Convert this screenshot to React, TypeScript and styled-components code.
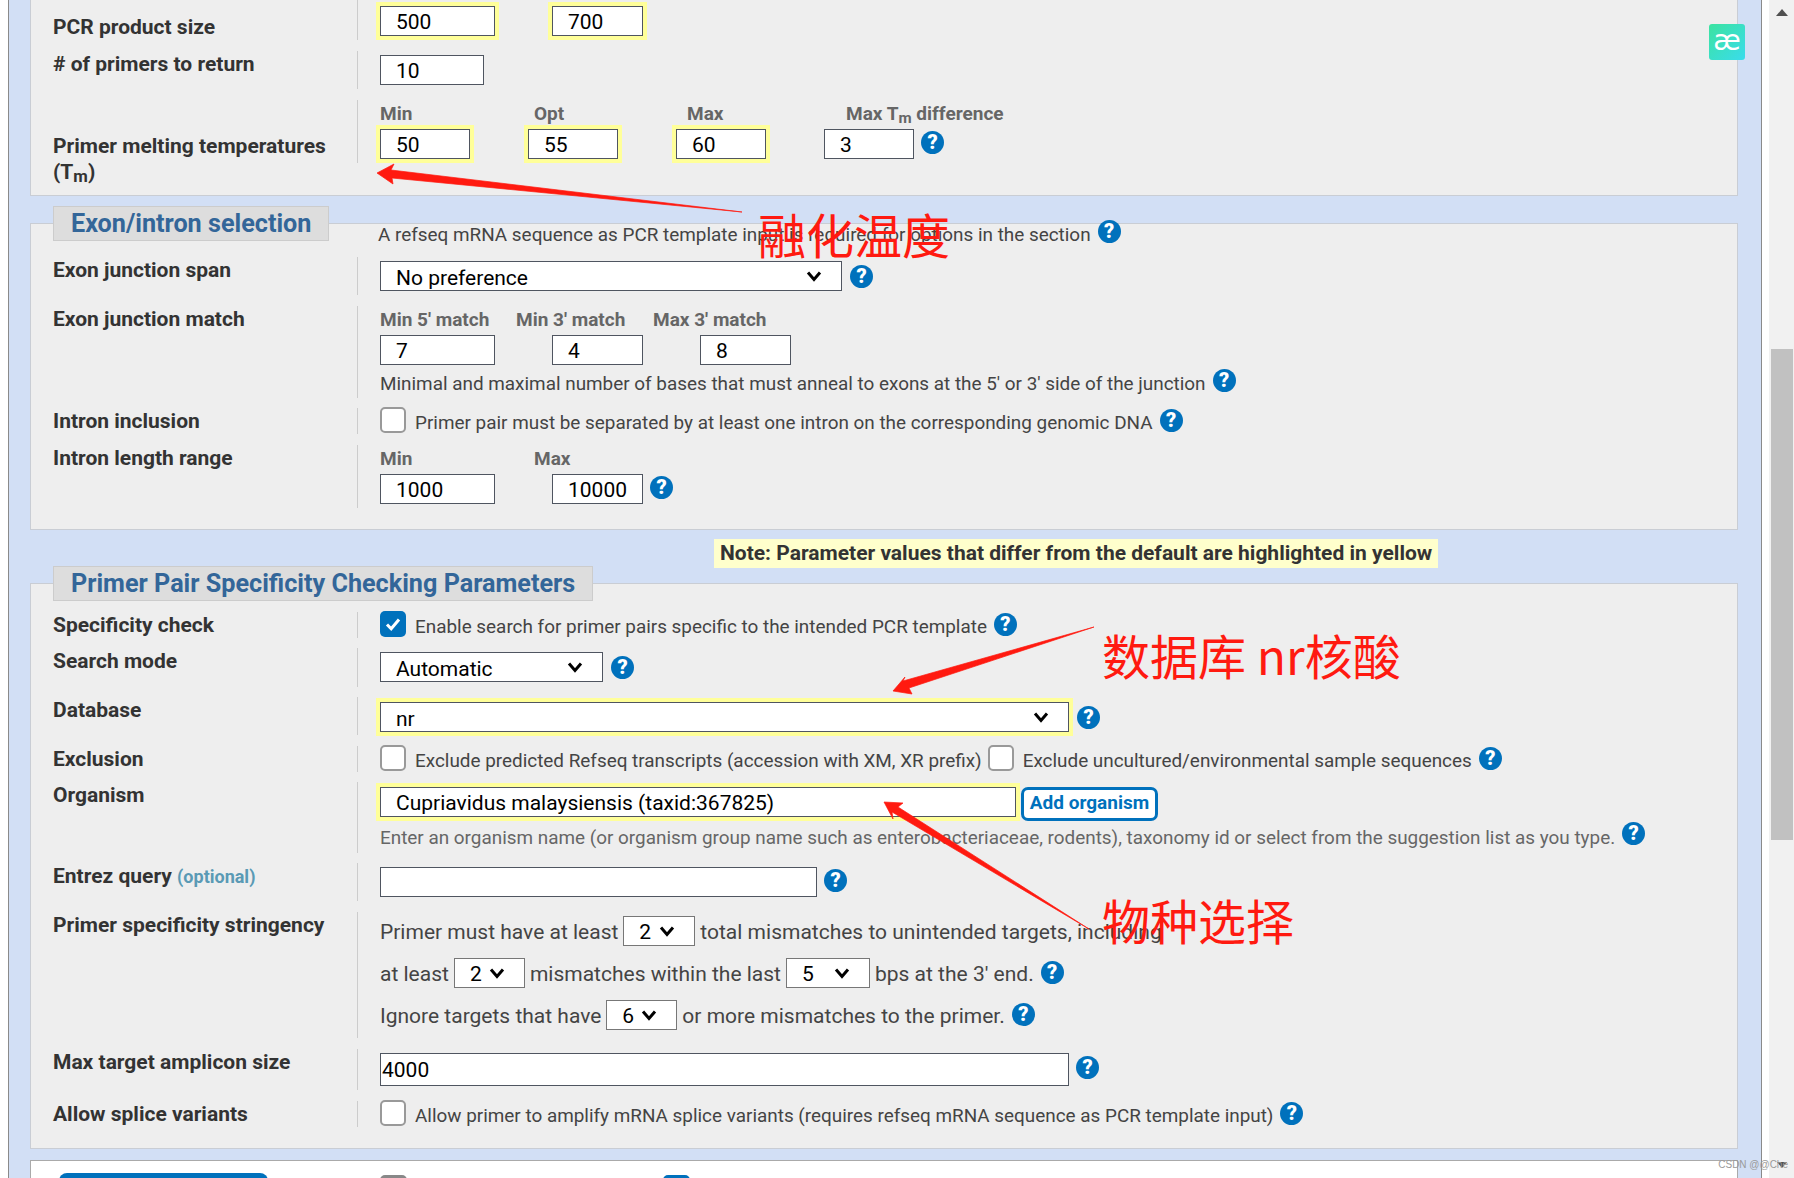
import styled, { createGlobalStyle } from 'styled-components'

const GlobalStyle = createGlobalStyle`
  html, body {
    margin: 0;
    padding: 0;
    height: 1178px;
    overflow: hidden;
    background: #fff;
  }
  body {
    font-family: Roboto, "Liberation Sans", sans-serif;
  }
`

function Help({ up }: { up?: number }) {
  return <HelpDot $up={up ?? 0}>?</HelpDot>
}

function Check({ on, left }: { on?: boolean; left?: number }) {
  return (
    <CheckBox $on={!!on} $left={left ?? 0}>
      {on && (
        <svg width="18" height="18" viewBox="0 0 18 18">
          <path d="M3 9.5l4.2 4.3L15 4.5" fill="none" stroke="#fff" strokeWidth="3" />
        </svg>
      )}
    </CheckBox>
  )
}

function TextBox({ value, w, hl }: { value: string; w: number; hl?: boolean }) {
  return <Input readOnly value={value} $w={w} $hl={!!hl} />
}

function Chevron() {
  return (
    <ChevronIcon width="16" height="12" viewBox="0 0 16 12">
      <path d="M2 2.5l6 7 6-7" fill="none" stroke="#000" strokeWidth="3" />
    </ChevronIcon>
  )
}

function Drop({ value, w, hl }: { value: string; w: number; hl?: boolean }) {
  return (
    <DropWrap $w={w}>
      <Select value={value} onChange={() => {}} $hl={!!hl}>
        <option value={value}>{value}</option>
      </Select>
      <Chevron />
    </DropWrap>
  )
}

function InlineDrop({ value, w }: { value: string; w: number }) {
  return (
    <InlineWrap $w={w}>
      <SmallSelect value={value} onChange={() => {}}>
        <option value={value}>{value}</option>
      </SmallSelect>
      <Chevron />
    </InlineWrap>
  )
}

export default function App() {
  return (
    <>
      <GlobalStyle />
      <Page>
        <Main>
          <Panel>
            <Row>
              <Label $top={14}>PCR product size</Label>
              <Field $h={40} $top={6}>
                <Line>
                  <Cell $w={172}>
                    <TextBox value="500" w={115} hl />
                  </Cell>
                  <TextBox value="700" w={91} hl />
                </Line>
              </Field>
            </Row>
            <Row>
              <Label># of primers to return</Label>
              <Field $h={38} $top={4}>
                <TextBox value="10" w={104} />
              </Field>
            </Row>
            <Row $gap={10}>
              <Label $top={33}>
                Primer melting temperatures
                <br />
                (T<Sub>m</Sub>)
              </Label>
              <Field $h={63}>
                <Caps>
                  <Cap $w={154}>Min</Cap>
                  <Cap $w={153}>Opt</Cap>
                  <Cap $w={159}>Max</Cap>
                  <Cap>
                    Max T<Sub>m</Sub> difference
                  </Cap>
                </Caps>
                <Line>
                  <Cell $w={148}>
                    <TextBox value="50" w={90} hl />
                  </Cell>
                  <Cell $w={148}>
                    <TextBox value="55" w={90} hl />
                  </Cell>
                  <Cell $w={148}>
                    <TextBox value="60" w={90} hl />
                  </Cell>
                  <TextBox value="3" w={90} />
                  <Help up={2} />
                </Line>
              </Field>
            </Row>
          </Panel>

          <Panel $top={27} $titled>
            <Legend>Exon/intron selection</Legend>
            <Intro>
              A refseq mRNA sequence as PCR template input is required for options in the section
              <Help up={4} />
            </Intro>
            <Row>
              <Label>Exon junction span</Label>
              <Field $h={38} $top={4}>
                <Line>
                  <Drop value="No preference" w={462} />
                  <Help />
                </Line>
              </Field>
            </Row>
            <Row $gap={10}>
              <Label>Exon junction match</Label>
              <Field $h={92}>
                <Caps>
                  <Cap $w={136}>Min 5' match</Cap>
                  <Cap $w={137}>Min 3' match</Cap>
                  <Cap>Max 3' match</Cap>
                </Caps>
                <Line>
                  <Cell $w={172}>
                    <TextBox value="7" w={115} />
                  </Cell>
                  <Cell $w={148}>
                    <TextBox value="4" w={91} />
                  </Cell>
                  <TextBox value="8" w={91} />
                </Line>
                <Hint $top={6}>
                  Minimal and maximal number of bases that must anneal to exons at the 5' or 3' side of the junction
                  <Help up={2} />
                </Hint>
              </Field>
            </Row>
            <Row>
              <Label>Intron inclusion</Label>
              <Field $h={26}>
                <CheckLine>
                  <Check />
                  <Desc>Primer pair must be separated by at least one intron on the corresponding genomic DNA</Desc>
                  <Help up={-1} />
                </CheckLine>
              </Field>
            </Row>
            <Row $gap={21}>
              <Label>Intron length range</Label>
              <Field $h={63}>
                <Caps>
                  <Cap $w={154}>Min</Cap>
                  <Cap>Max</Cap>
                </Caps>
                <Line>
                  <Cell $w={172}>
                    <TextBox value="1000" w={115} />
                  </Cell>
                  <TextBox value="10000" w={91} />
                  <Help up={2} />
                </Line>
              </Field>
            </Row>
          </Panel>

          <NoteBar>
            <Note>Note: Parameter values that differ from the default are highlighted in yellow</Note>
          </NoteBar>

          <Panel $top={15} $titled>
            <Legend>Primer Pair Specificity Checking Parameters</Legend>
            <Spacer $h={28} />
            <Row $gap={10}>
              <Label>Specificity check</Label>
              <Field $h={26}>
                <CheckLine>
                  <Check on />
                  <Desc>Enable search for primer pairs specific to the intended PCR template</Desc>
                  <Help up={-1} />
                </CheckLine>
              </Field>
            </Row>
            <Row $gap={10}>
              <Label>Search mode</Label>
              <Field $h={39} $top={4}>
                <Line>
                  <Drop value="Automatic" w={223} />
                  <Help />
                </Line>
              </Field>
            </Row>
            <Row>
              <Label>Database</Label>
              <Field $h={38} $top={5}>
                <Line>
                  <Drop value="nr" w={689} hl />
                  <Help />
                </Line>
              </Field>
            </Row>
            <Row $gap={10}>
              <Label>Exclusion</Label>
              <Field $h={26}>
                <CheckLine>
                  <Check />
                  <Desc>Exclude predicted Refseq transcripts (accession with XM, XR prefix)</Desc>
                  <Check left={6} />
                  <Desc>Exclude uncultured/environmental sample sequences</Desc>
                  <Help up={-1} />
                </CheckLine>
              </Field>
            </Row>
            <Row $gap={10}>
              <Label>Organism</Label>
              <Field $h={71} $top={5}>
                <TopLine>
                  <TextBox value="Cupriavidus malaysiensis (taxid:367825)" w={636} hl />
                  <AddButton>Add organism</AddButton>
                </TopLine>
                <Hint $top={4} $muted>
                  Enter an organism name (or organism group name such as enterobacteriaceae, rodents), taxonomy id or
                  select from the suggestion list as you type.
                  <Help up={3} />
                </Hint>
              </Field>
            </Row>
            <Row>
              <Label>
                Entrez query <Optional>(optional)</Optional>
              </Label>
              <Field $h={38} $top={4}>
                <Line>
                  <TextBox value="" w={437} />
                  <Help up={2} />
                </Line>
              </Field>
            </Row>
            <Row>
              <Label>Primer specificity stringency</Label>
              <Field $h={126} $top={4}>
                <Sentence>
                  Primer must have at least
                  <InlineDrop value="2" w={72} />
                  total mismatches to unintended targets, including
                </Sentence>
                <Sentence>
                  at least
                  <InlineDrop value="2" w={71} />
                  mismatches within the last
                  <InlineDrop value="5" w={84} />
                  bps at the 3' end.
                  <Help up={-3} />
                </Sentence>
                <Sentence>
                  Ignore targets that have
                  <InlineDrop value="6" w={71} />
                  or more mismatches to the primer.
                  <Help up={-3} />
                </Sentence>
              </Field>
            </Row>
            <Row>
              <Label>Max target amplicon size</Label>
              <Field $h={41} $top={4}>
                <Line>
                  <PlainInput readOnly value="4000" />
                  <Help up={2} />
                </Line>
              </Field>
            </Row>
            <Row $gap={21}>
              <Label>Allow splice variants</Label>
              <Field $h={26}>
                <CheckLine>
                  <Check />
                  <Desc>Allow primer to amplify mRNA splice variants (requires refseq mRNA sequence as PCR template input)</Desc>
                  <Help up={-1} />
                </CheckLine>
              </Field>
            </Row>
          </Panel>

          <BottomPanel>
            <GoButton />
            <MiniCheck />
            <MiniCheck $on />
          </BottomPanel>
        </Main>

        <Scrollbar>
          <ArrowUp />
          <Thumb />
          <ArrowDown />
        </Scrollbar>

        <Notes width="1794" height="1178" viewBox="0 0 1794 1178">
          <ArrowShape d="M377 173L394 164L391 170L742 212L392 178L393 184Z" />
          <ArrowShape d="M893 691L905 677L903 681L1094 627L909 688L912 694Z" />
          <ArrowShape d="M884 802L903 803L898 807L1089 929L892 812L893 819Z" />
        </Notes>
        <Scribble $x={758} $y={201}>融化温度</Scribble>
        <Scribble $x={1102} $y={622}>数据库 nr核酸</Scribble>
        <Scribble $x={1102} $y={887}>物种选择</Scribble>
        <Badge>æ</Badge>
        <Watermark>CSDN @@Che</Watermark>
      </Page>
    </>
  )
}

const Page = styled.div`
  position: relative;
  width: 1794px;
  height: 1178px;
  overflow: hidden;
  display: flex;
  background: #fff;
`

const Main = styled.div`
  box-sizing: border-box;
  width: 1754px;
  height: 1178px;
  margin-left: 8px;
  padding: 0 23px 0 21px;
  background: #d2dff5;
  border-left: 1px solid #8a8a8a;
  border-right: 1px solid #8a8a8a;
  overflow: hidden;
`

const Panel = styled.section<{ $top?: number; $titled?: boolean }>`
  position: relative;
  box-sizing: border-box;
  margin-top: ${p => p.$top ?? 0}px;
  padding: 0 0 0 22px;
  background: #eee;
  border: 1px solid #c9cdd4;
  border-top: ${p => (p.$titled ? '1px solid #c9cdd4' : 'none')};
`

const Legend = styled.h2`
  position: absolute;
  top: -18px;
  left: 22px;
  box-sizing: border-box;
  margin: 0;
  padding: 0 17px;
  height: 35px;
  line-height: 33px;
  background: #ddd;
  border: 1px solid #ccc;
  color: #336699;
  font-size: 25.2px;
  font-weight: 700;
  white-space: nowrap;
`

const Row = styled.div<{ $gap?: number }>`
  display: flex;
  align-items: flex-start;
  margin-bottom: ${p => p.$gap ?? 11}px;
`

const Label = styled.div<{ $top?: number }>`
  box-sizing: border-box;
  width: 304px;
  flex: none;
  padding-top: ${p => p.$top ?? 0}px;
  color: #333;
  font-size: 21px;
  font-weight: 700;
  line-height: 26px;
  white-space: nowrap;
`

const Sub = styled.sub`
  font-size: 0.8em;
  line-height: 0;
  vertical-align: -0.2em;
`

const Field = styled.div<{ $h: number; $top?: number }>`
  box-sizing: border-box;
  flex: 1;
  min-width: 0;
  height: ${p => p.$h}px;
  padding-top: ${p => p.$top ?? 0}px;
  padding-left: 22px;
  border-left: 1px solid #ccc;
`

const Line = styled.div`
  display: flex;
  align-items: center;
  white-space: nowrap;
`

const TopLine = styled(Line)`
  align-items: flex-start;
`

const CheckLine = styled(Line)`
  align-items: flex-start;
  height: 26px;
`

const Cell = styled.div<{ $w: number }>`
  flex: none;
  width: ${p => p.$w}px;
`

const Caps = styled.div`
  display: flex;
  height: 26px;
  margin-bottom: 3px;
  align-items: center;
`

const Cap = styled.div<{ $w?: number }>`
  flex: none;
  width: ${p => (p.$w ? `${p.$w}px` : 'auto')};
  color: #666;
  font-size: 19px;
  font-weight: 700;
  white-space: nowrap;
`

const Input = styled.input<{ $w: number; $hl: boolean }>`
  display: block;
  box-sizing: border-box;
  flex: none;
  width: ${p => p.$w}px;
  height: 30px;
  padding: 1px 15px 0;
  background: #fff;
  border: 1px solid #4f5560;
  border-radius: 0;
  outline: none;
  color: #000;
  font-family: Roboto, sans-serif;
  font-size: 21px;
  box-shadow: ${p => (p.$hl ? '0 0 0 4px #ffff99' : 'none')};
`

const PlainInput = styled.input`
  display: block;
  box-sizing: border-box;
  flex: none;
  width: 689px;
  height: 33px;
  padding: 1px;
  background: #fff;
  border: 1px solid #4f5560;
  border-radius: 0;
  outline: none;
  color: #000;
  font-family: Roboto, sans-serif;
  font-size: 21px;
`

const DropWrap = styled.div<{ $w: number }>`
  position: relative;
  flex: none;
  width: ${p => p.$w}px;
  height: 30px;
  margin-right: 1px;
`

const InlineWrap = styled.div<{ $w: number }>`
  position: relative;
  flex: none;
  width: ${p => p.$w}px;
  height: 30px;
  margin: 0 5px;
`

const ChevronIcon = styled.svg`
  position: absolute;
  right: 20px;
  top: 9px;
  pointer-events: none;
`

const Select = styled.select<{ $hl: boolean }>`
  display: block;
  appearance: none;
  box-sizing: border-box;
  width: 100%;
  height: 30px;
  padding: 3px 15px 0;
  background-color: #fff;
  border: 1px solid #4f5560;
  border-radius: 0;
  outline: none;
  color: #000;
  font-family: Roboto, sans-serif;
  font-size: 21px;
  box-shadow: ${p => (p.$hl ? '0 0 0 4px #ffff99' : 'none')};
`

const SmallSelect = styled.select`
  display: block;
  appearance: none;
  box-sizing: border-box;
  width: 100%;
  height: 30px;
  padding: 2px 15px 0;
  background-color: #fff;
  border: 1px solid #777;
  border-radius: 0;
  outline: none;
  color: #000;
  font-family: Roboto, sans-serif;
  font-size: 21px;
`

const HelpDot = styled.span<{ $up: number }>`
  display: block;
  flex: none;
  width: 23px;
  height: 23px;
  margin-left: 7px;
  position: relative;
  top: ${p => -p.$up}px;
  border-radius: 50%;
  background: #0071bc;
  color: #fff;
  font-size: 20px;
  font-weight: 900;
  line-height: 23px;
  text-align: center;
`

const CheckBox = styled.span<{ $on: boolean; $left: number }>`
  display: flex;
  flex: none;
  align-items: center;
  justify-content: center;
  box-sizing: border-box;
  width: 26px;
  height: 26px;
  margin: -1px 9px 0 ${p => p.$left}px;
  background: ${p => (p.$on ? '#0071bc' : '#fff')};
  border: ${p => (p.$on ? 'none' : '2px solid #999')};
  border-radius: 5px;
`

const Desc = styled.span`
  margin-top: 2px;
  color: #444;
  font-size: 18.9px;
  line-height: 26px;
`

const Hint = styled.div<{ $top: number; $muted?: boolean }>`
  display: flex;
  margin-top: ${p => p.$top}px;
  color: ${p => (p.$muted ? '#666' : '#444')};
  font-size: 18.9px;
  line-height: 26px;
  white-space: nowrap;
`

const Intro = styled.div`
  display: flex;
  height: 22px;
  margin-bottom: 11px;
  margin-left: 325px;
  color: #444;
  font-size: 18.9px;
  line-height: 22px;
  white-space: nowrap;
`

const NoteBar = styled.div`
  height: 29px;
  margin-top: 9px;
  padding-left: 684px;
`

const Note = styled.span`
  display: inline-block;
  padding: 0 6px;
  background: #ffffcc;
  color: #333;
  font-size: 21px;
  font-weight: 700;
  line-height: 29px;
  white-space: nowrap;
`

const Spacer = styled.div<{ $h: number }>`
  height: ${p => p.$h}px;
`

const AddButton = styled.button`
  box-sizing: border-box;
  width: 137px;
  height: 34px;
  margin-left: 5px;
  padding: 0 0 4px;
  background: #fff;
  border: 3px solid #0071bc;
  border-radius: 7px;
  color: #0071bc;
  font-family: Roboto, sans-serif;
  font-size: 19px;
  font-weight: 700;
`

const Optional = styled.span`
  color: #5a9ab5;
  font-size: 18px;
  font-weight: 700;
`

const Sentence = styled.div`
  display: flex;
  align-items: flex-start;
  height: 30px;
  margin-bottom: 12px;
  color: #444;
  font-size: 21px;
  line-height: 32px;
  white-space: nowrap;
`

const BottomPanel = styled.div`
  display: flex;
  margin-top: 11px;
  padding: 12px 0 0 28px;
  height: 40px;
  background: #fff;
  border: 1px solid #aaa;
`

const GoButton = styled.div`
  width: 209px;
  height: 30px;
  margin-right: 112px;
  background: #0071bc;
  border-radius: 8px 8px 0 0;
`

const MiniCheck = styled.div<{ $on?: boolean }>`
  width: 27px;
  height: 30px;
  margin-top: 2px;
  margin-right: 256px;
  background: ${p => (p.$on ? '#0071bc' : '#888')};
  border-radius: 5px 5px 0 0;
`

const Scrollbar = styled.div`
  position: absolute;
  top: 0;
  right: 0;
  bottom: 0;
  display: flex;
  flex-direction: column;
  align-items: center;
  width: 25px;
  background: #f1f1f1;
`

const ArrowUp = styled.div`
  margin-top: 9px;
  border-left: 6px solid transparent;
  border-right: 6px solid transparent;
  border-bottom: 7px solid #505050;
`

const Thumb = styled.div`
  width: 22px;
  height: 491px;
  margin-top: 333px;
  background: #c1c1c1;
`

const ArrowDown = styled.div`
  margin-top: auto;
  margin-bottom: 10px;
  border-left: 5px solid transparent;
  border-right: 5px solid transparent;
  border-top: 6px solid #505050;
`

const Notes = styled.svg`
  position: absolute;
  top: 0;
  left: 0;
  pointer-events: none;
`

const ArrowShape = styled.path`
  fill: #ff1a10;
  stroke: #ff1a10;
  stroke-width: 0.7px;
`

const Scribble = styled.div<{ $x: number; $y: number }>`
  position: absolute;
  left: ${p => p.$x}px;
  top: ${p => p.$y}px;
  color: #ff1a10;
  font-family: "Noto Sans CJK SC", sans-serif;
  font-size: 48px;
  line-height: 64px;
  white-space: nowrap;
`

const Badge = styled.div`
  position: absolute;
  left: 1709px;
  top: 24px;
  width: 36px;
  height: 36px;
  border-radius: 3px;
  background: linear-gradient(135deg, #3be3a0, #3adcec);
  color: #fff;
  font-family: "DejaVu Sans", sans-serif;
  font-size: 28px;
  line-height: 34px;
  text-align: center;
`

const Watermark = styled.div`
  position: absolute;
  right: 6px;
  top: 1159px;
  color: #9a9a9a;
  font-family: "Liberation Sans", sans-serif;
  font-size: 10px;
  white-space: nowrap;
`
